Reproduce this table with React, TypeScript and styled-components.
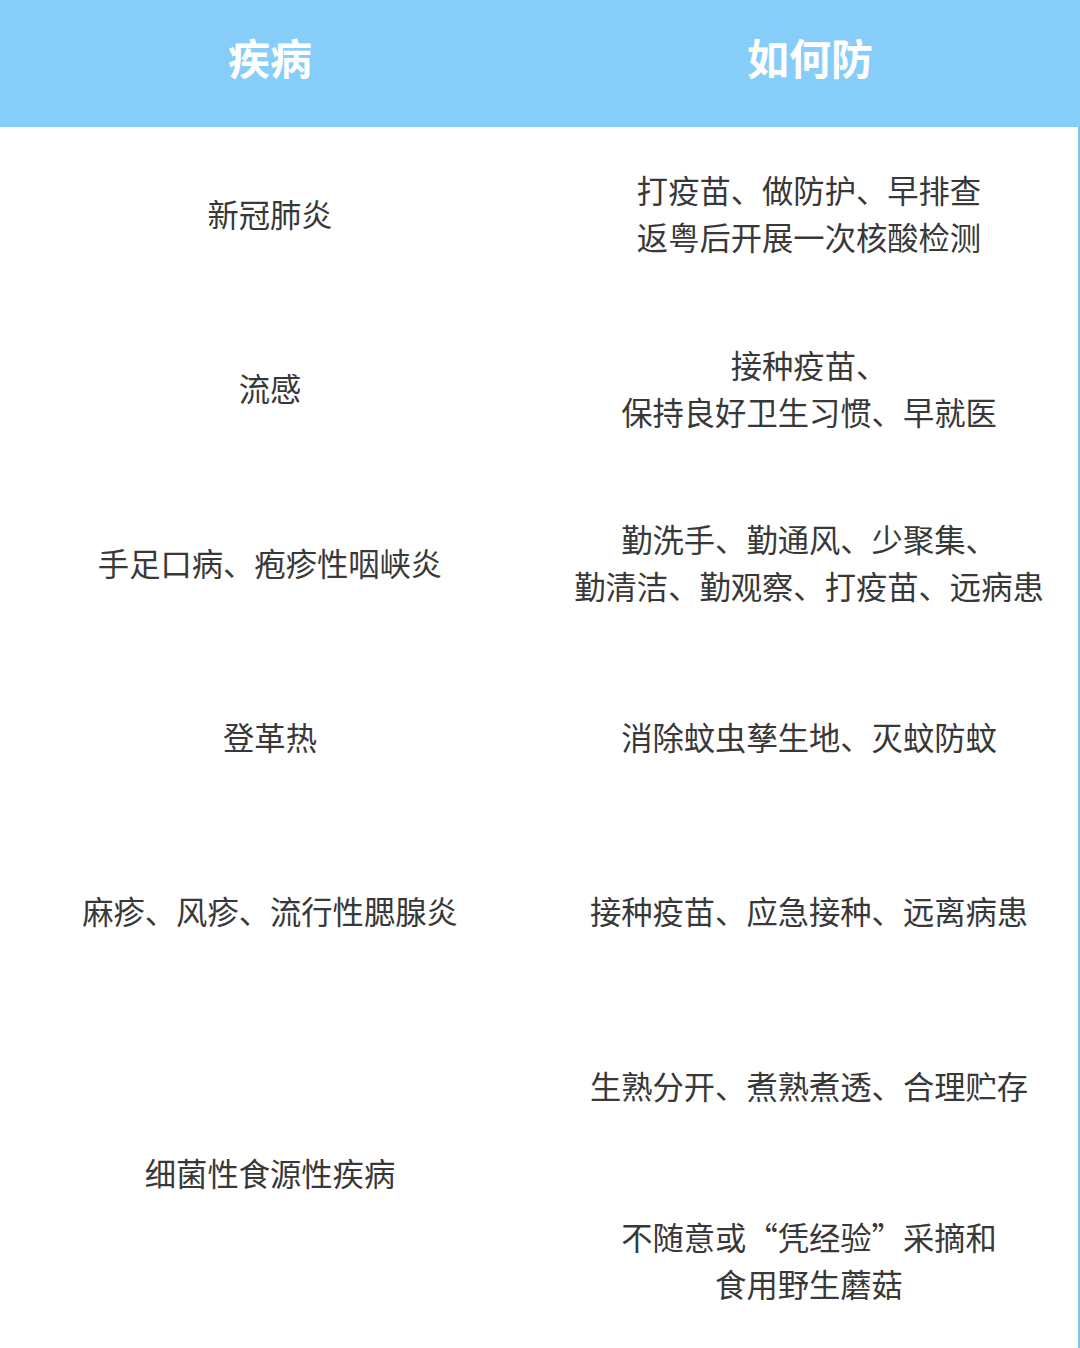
import * as React from 'react';
import styled, { createGlobalStyle } from 'styled-components';

const GlobalStyle = createGlobalStyle`
  html, body {
    margin: 0;
    padding: 0;
    background: #ffffff;
  }
  body {
    font-family: "Noto Sans CJK SC", "Noto Sans", sans-serif;
  }
`;

const Page = styled.div`
  width: 1080px;
  height: 1348px;
  display: flex;
  flex-direction: column;
  overflow: hidden;
`;

const Header = styled.div`
  height: 127px;
  background: #87cdfa;
  display: grid;
  grid-template-columns: 540px 540px;
  align-items: center;
`;

const HeaderCell = styled.div`
  text-align: center;
  color: #ffffff;
  font-size: 42px;
  font-weight: 700;
  padding-bottom: 14px;
`;

const Body = styled.div`
  flex: 1;
  display: grid;
  grid-template-columns: 540px 538px;
  grid-template-rows: repeat(7, 1fr);
  border-right: 2px solid #79c6e6;
`;

const Cell = styled.div<{ $span?: number }>`
  grid-row: span ${(p) => p.$span ?? 1};
  display: flex;
  align-items: center;
  justify-content: center;
  text-align: center;
  color: #383838;
  font-size: 31.3px;
  line-height: 47px;
  padding-bottom: 2px;
`;

const Lines = styled.div`
  display: flex;
  flex-direction: column;
  align-items: center;
`;

const rows: { disease: string; advice: string[][] }[] = [
  { disease: '新冠肺炎', advice: [['打疫苗、做防护、早排查', '返粤后开展一次核酸检测']] },
  { disease: '流感', advice: [['接种疫苗、', '保持良好卫生习惯、早就医']] },
  { disease: '手足口病、疱疹性咽峡炎', advice: [['勤洗手、勤通风、少聚集、', '勤清洁、勤观察、打疫苗、远病患']] },
  { disease: '登革热', advice: [['消除蚊虫孳生地、灭蚊防蚊']] },
  { disease: '麻疹、风疹、流行性腮腺炎', advice: [['接种疫苗、应急接种、远离病患']] },
  {
    disease: '细菌性食源性疾病',
    advice: [['生熟分开、煮熟煮透、合理贮存'], ['不随意或“凭经验”采摘和', '食用野生蘑菇']],
  },
];

const App = () => (
  <>
    <GlobalStyle />
    <Page>
      <Header>
        <HeaderCell>疾病</HeaderCell>
        <HeaderCell>如何防</HeaderCell>
      </Header>
      <Body>
        {rows.map((r) => (
          <React.Fragment key={r.disease}>
            <Cell $span={r.advice.length}>{r.disease}</Cell>
            {r.advice.map((block, i) => (
              <Cell key={i}>
                <Lines>
                  {block.map((line) => (
                    <span key={line}>{line}</span>
                  ))}
                </Lines>
              </Cell>
            ))}
          </React.Fragment>
        ))}
      </Body>
    </Page>
  </>
);

export default App;
